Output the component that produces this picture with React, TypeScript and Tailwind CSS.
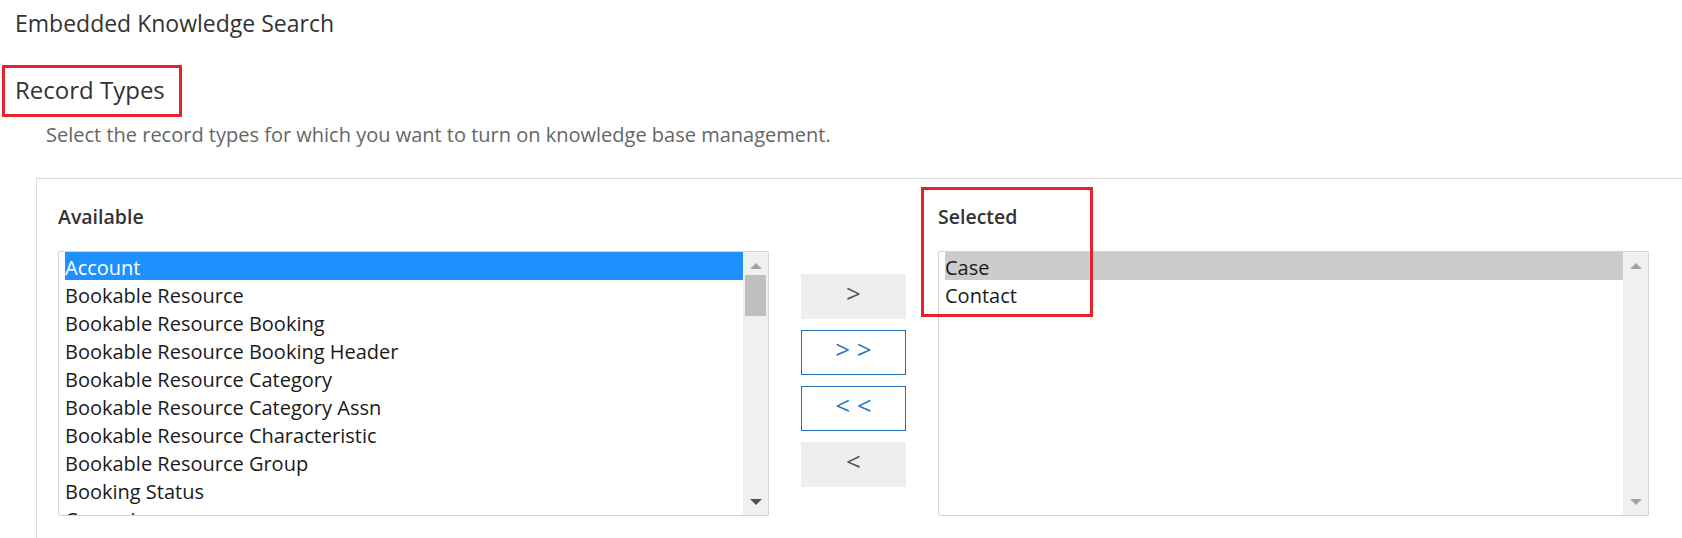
const available = [
  "Account",
  "Bookable Resource",
  "Bookable Resource Booking",
  "Bookable Resource Booking Header",
  "Bookable Resource Category",
  "Bookable Resource Category Assn",
  "Bookable Resource Characteristic",
  "Bookable Resource Group",
  "Booking Status",
  "Campaign",
  "Campaign Activity",
];

const selected = ["Case", "Contact"];

function ListBox({ items, active, activeClass, arrowUp, arrowDown, thumb }: {
  items: string[];
  active: number;
  activeClass: string;
  arrowUp: string;
  arrowDown: string;
  thumb: boolean;
}) {
  return (
    <div className="flex h-[265px] border border-[#d3d3d3] rounded-[2px] overflow-hidden bg-white">
      <div className="flex-1 pl-[6px] overflow-hidden">
        {items.map((item, i) => (
          <div
            key={item}
            className={`h-[28px] leading-[28px] text-[20px] whitespace-nowrap ${i === active ? activeClass : "text-[#1a1a1a]"}`}
          >
            <span className="relative top-[2px]">{item}</span>
          </div>
        ))}
      </div>
      <div className="w-[25px] bg-[#f0f0f0] flex flex-col items-center">
        <div className={`mt-[11px] w-0 h-0 border-x-[6px] border-x-transparent border-b-[6px] ${arrowUp}`} />
        {thumb ? <div className="mt-[6px] w-[21px] h-[41px] bg-[#bfbfbf]" /> : null}
        <div className="flex-1" />
        <div className={`mb-[10px] w-0 h-0 border-x-[6px] border-x-transparent border-t-[6px] ${arrowDown}`} />
      </div>
    </div>
  );
}

export default function App() {
  return (
    <div className="w-[1682px] h-[538px] overflow-hidden bg-white font-['Open_Sans',sans-serif]">
      <h1 className="pl-[15px] pt-[8px] text-[23px] leading-[30px] text-[#333]">Embedded Knowledge Search</h1>

      <div className="mt-[27px] ml-[2px] inline-block border-[3px] border-[#e8202a] pl-[10px] pr-[14px] h-[52px]">
        <h2 className="text-[24px] leading-[44px] text-[#333]">Record Types</h2>
      </div>

      <p className="pl-[46px] mt-[5px] text-[20px] leading-[26px] text-[#666]">
        Select the record types for which you want to turn on knowledge base management.
      </p>

      <div className="mt-[30px] ml-[36px] w-[1700px] border-l border-t border-[#dcdcdc] pl-[21px] pt-[26px] h-[400px]">
        <div className="flex">
          <div className="w-[711px]">
            <div className="text-[19.5px] leading-[24px] font-semibold text-[#333]">Available</div>
            <div className="mt-[22px]">
              <ListBox
                items={available}
                active={0}
                activeClass="bg-[#1e90ff] text-white"
                arrowUp="border-b-[#a3a3a3]"
                arrowDown="border-t-[#505050]"
                thumb
              />
            </div>
          </div>

          <div className="ml-[32px] w-[105px] pt-[69px] flex flex-col gap-[11px]">
            <button className="h-[45px] bg-[#eeeeee] text-[#555] text-[26px] leading-none pb-[8px]">&gt;</button>
            <button className="h-[45px] border border-[#1f6fb4] bg-white text-[#2a78c0] text-[26px] leading-none pb-[8px]">&gt; &gt;</button>
            <button className="h-[45px] border border-[#1f6fb4] bg-white text-[#2a78c0] text-[26px] leading-none pb-[8px]">&lt; &lt;</button>
            <button className="h-[45px] bg-[#eeeeee] text-[#555] text-[26px] leading-none pb-[8px]">&lt;</button>
          </div>

          <div className="relative ml-[32px] w-[711px]">
            <div className="text-[19.5px] leading-[24px] font-semibold text-[#333]">Selected</div>
            <div className="mt-[22px]">
              <ListBox
                items={selected}
                active={0}
                activeClass="bg-[#cccccc] text-[#1a1a1a]"
                arrowUp="border-b-[#a3a3a3]"
                arrowDown="border-t-[#a3a3a3]"
                thumb={false}
              />
            </div>
            <div className="absolute left-[-17px] top-[-18px] w-[172px] h-[130px] border-[3px] border-[#e8202a]" />
          </div>
        </div>
      </div>
    </div>
  );
}
